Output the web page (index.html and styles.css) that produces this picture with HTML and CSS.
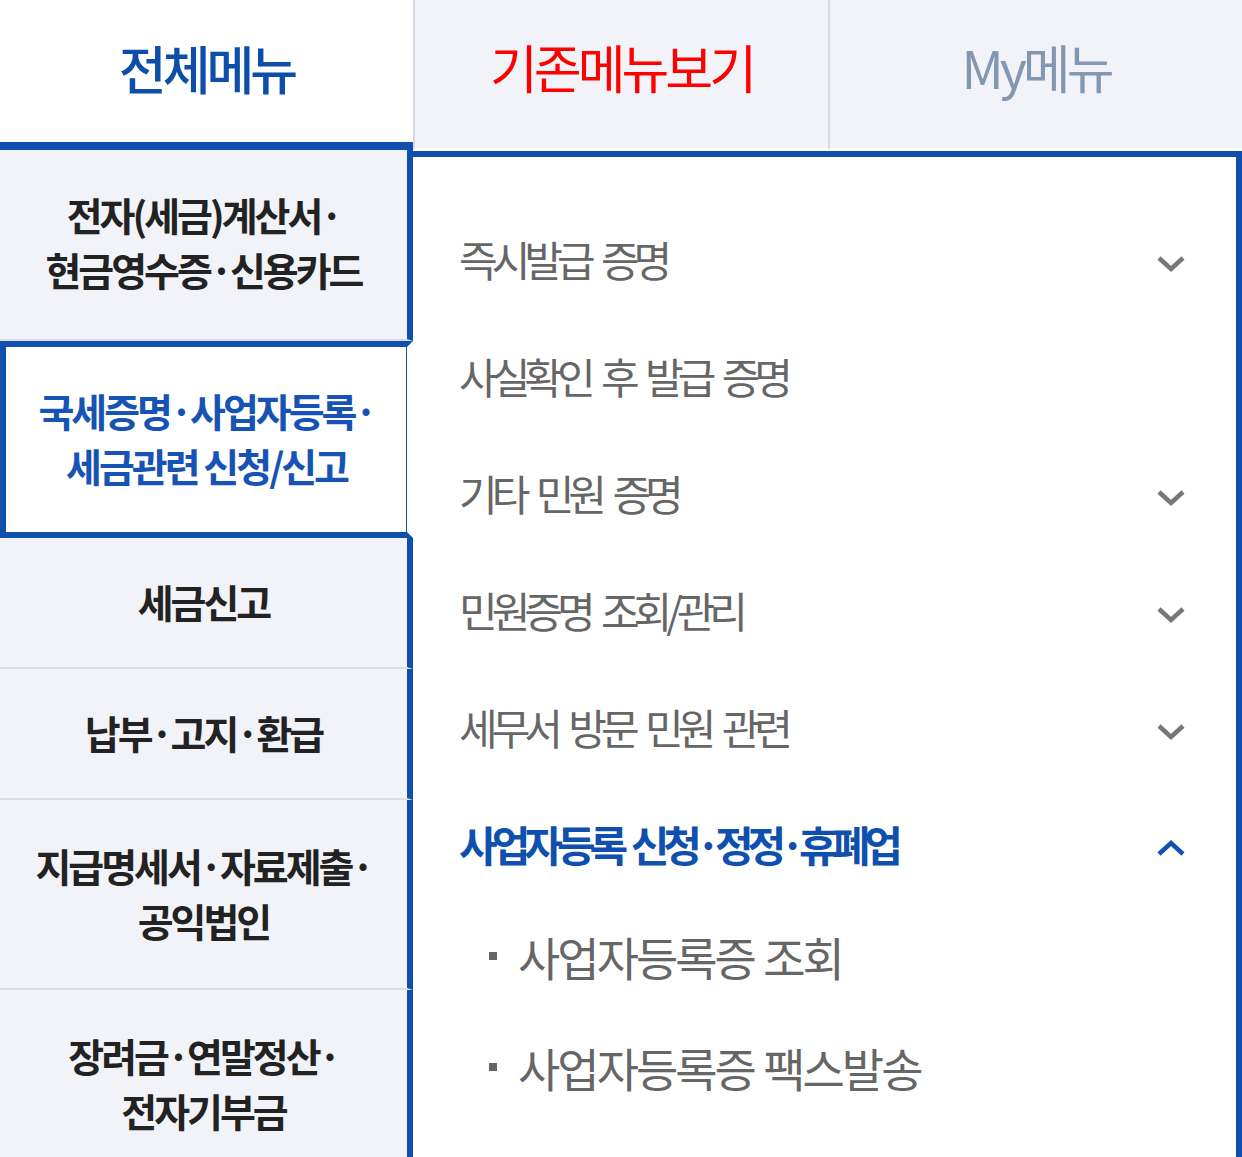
FILE: index.html
```html
<!DOCTYPE html>
<html>
<head>
  <meta charset="utf-8">
  <title>전체메뉴</title>
  <link rel="stylesheet" href="styles.css">
</head>
<body>

  <div class="tabs">
    <div class="tab active">전체메뉴</div>
    <div class="tab old">기존메뉴보기</div>
    <div class="tab my">My메뉴</div>
  </div>

  <div class="menu-body">
    <ul class="side">
      <li class="two">전자(세금)계산서·<br>현금영수증·신용카드</li>
      <li class="two active">국세증명·사업자등록·<br>세금관련 신청/신고</li>
      <li>세금신고</li>
      <li>납부·고지·환급</li>
      <li class="two">지급명세서·자료제출·<br>공익법인</li>
      <li class="two">장려금·연말정산·<br>전자기부금</li>
    </ul>

    <div class="panel">
      <div class="row">
        <span>즉시발급 증명</span>
        <svg class="chev" viewBox="0 0 30 18"><polyline points="3,3 15,14 27,3"/></svg>
      </div>
      <div class="row">
        <span>사실확인 후 발급 증명</span>
      </div>
      <div class="row">
        <span>기타 민원 증명</span>
        <svg class="chev" viewBox="0 0 30 18"><polyline points="3,3 15,14 27,3"/></svg>
      </div>
      <div class="row">
        <span>민원증명 조회/관리</span>
        <svg class="chev" viewBox="0 0 30 18"><polyline points="3,3 15,14 27,3"/></svg>
      </div>
      <div class="row">
        <span>세무서 방문 민원 관련</span>
        <svg class="chev" viewBox="0 0 30 18"><polyline points="3,3 15,14 27,3"/></svg>
      </div>
      <div class="row open">
        <span>사업자등록 신청·정정·휴폐업</span>
        <svg class="chev" viewBox="0 0 30 18"><polyline points="3,15 15,4 27,15"/></svg>
      </div>
      <ul class="sub">
        <li>사업자등록증 조회</li>
        <li>사업자등록증 팩스발송</li>
        <li>사업자등록증 재발급 신청</li>
      </ul>
    </div>
  </div>

</body>
</html>
```

FILE: styles.css
```css
body {
  margin: 0;
  font-family: "Noto Sans CJK KR", "Noto Sans", sans-serif;
  background: #ffffff;
  overflow: hidden;
}

.tabs {
  display: flex;
  height: 150px;
}

.tab {
  flex: 1;
  display: flex;
  align-items: center;
  justify-content: center;
  padding-bottom: 16px;
  box-sizing: border-box;
  font-size: 52px;
  letter-spacing: -4px;
  background: #f2f3f8;
  border-left: 2px solid #d8d9e3;
  border-bottom: 2px solid #ffffff;
}

.tab.active {
  flex: 0 0 413px;
  background: #ffffff;
  color: #0d4ea8;
  font-weight: 500;
  border-left: none;
  border-bottom: 8px solid #0f4fae;
  padding-bottom: 8px;
}

.tab.old {
  flex: 0 0 415px;
  color: #ff0000;
}

.tab.my {
  color: #8497b0;
}

.menu-body {
  display: flex;
  align-items: flex-start;
}

.side {
  list-style: none;
  margin: 0;
  padding: 0;
  width: 413px;
  flex-shrink: 0;
}

.side li {
  box-sizing: border-box;
  padding: 36px 0 38px;
  background: #f2f3f8;
  border-right: 6px solid #0f4fae;
  border-bottom: 2px solid #dcdde2;
  text-align: center;
  font-size: 39px;
  font-weight: 700;
  line-height: 55px;
  letter-spacing: -3px;
  color: #222;
}

.side li.two {
  padding: 38px 0 40px;
}

.side li:first-child {
  padding: 37px 0 42px;
}

.side li.active {
  background: #ffffff;
  color: #1753b5;
  border: 6px solid #0f4fae;
  border-right: 6px solid #ffffff;
  box-shadow: inset -1px 0 0 #0f4fae;
  padding: 36px 0 39px;
}

.panel {
  flex: 1;
  margin-top: 1px;
  border-top: 6px solid #0f4fae;
  border-right: 6px solid #0f4fae;
  padding: 43px 50px 0 46px;
  min-height: 1100px;
}

.row {
  display: flex;
  align-items: center;
  justify-content: space-between;
  height: 117px;
  font-size: 42px;
  letter-spacing: -6px;
  word-spacing: 8px;
  color: #666;
}

.row.open {
  color: #0f4fae;
  font-weight: 700;
  word-spacing: 5px;
}

.chev {
  width: 30px;
  height: 18px;
  margin-top: 10px;
  fill: none;
  stroke: #777;
  stroke-width: 4.5;
}

.row.open .chev {
  stroke: #1450b0;
  margin-top: 8px;
}

.sub {
  list-style: none;
  margin: -2px 0 0;
  padding: 0 0 0 30px;
}

.sub li {
  display: flex;
  align-items: center;
  height: 111px;
  font-size: 46px;
  letter-spacing: -3px;
  word-spacing: 2px;
  color: #666;
}

.sub li::before {
  content: "";
  width: 8px;
  height: 8px;
  background: #666;
  margin-right: 21px;
}
```
